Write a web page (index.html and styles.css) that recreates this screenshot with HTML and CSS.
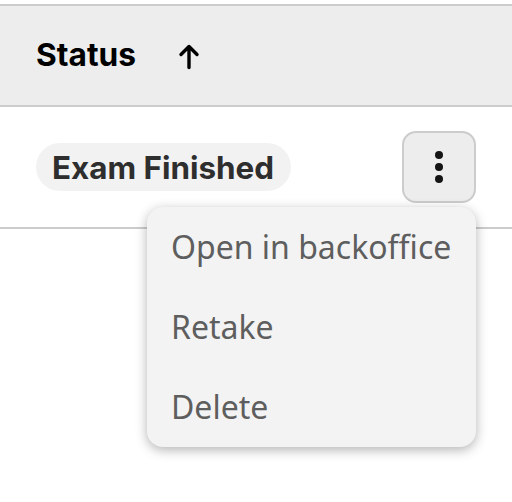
FILE: index.html
```html
<!DOCTYPE html>
<html lang="en">
<head>
<meta charset="utf-8">
<title>Status</title>
<link rel="stylesheet" href="styles.css">
</head>
<body>
<div class="table">
  <div class="head">
    <span class="head-label">Status</span>
    <svg class="sort" width="22" height="27" viewBox="0 0 22 27" aria-hidden="true"><path d="M11 24.500V3.500M3 11.500 11 3.500l8 8" fill="none" stroke="#000" stroke-width="3.4" stroke-linecap="round" stroke-linejoin="round"/></svg>
  </div>
  <div class="row">
    <span class="pill">Exam Finished</span>
    <button class="more" aria-label="More">
      <i class="dot"></i><i class="dot"></i><i class="dot"></i>
    </button>
    <ul class="menu">
      <li>Open in backoffice</li>
      <li>Retake</li>
      <li>Delete</li>
    </ul>
  </div>
</div>
</body>
</html>
```
FILE: styles.css
```css
* { box-sizing: border-box; }
html, body { margin: 0; height: 100%; background: #fff; overflow: hidden; }
.table { padding-top: 4px; }
.head {
  height: 103px;
  display: flex;
  align-items: center;
  gap: 42px;
  padding: 0 36px;
  background: #ededed;
  border-top: 2px solid #ccc;
  border-bottom: 2px solid #ccc;
}
.head-label { font: 700 31.7px/34px Inter, sans-serif; color: #000; margin-top: -1px; }
.sort { flex: none; margin-top: 2px; }
.row {
  position: relative;
  height: 122px;
  display: flex;
  align-items: center;
  justify-content: space-between;
  padding: 0 36px;
  border-bottom: 2px solid #ccc;
}
.pill {
  font: 700 31.4px/46px Inter, sans-serif;
  color: #2e2e2e;
  background: #f2f2f2;
  border-radius: 24px;
  padding: 2px 17px 0 16px;
}
.more {
  width: 74px;
  height: 72px;
  display: flex;
  flex-direction: column;
  align-items: center;
  justify-content: center;
  gap: 4px;
  padding: 0;
  background: #ededed;
  border: 2px solid #ccc;
  border-radius: 14px;
}
.dot { width: 8px; height: 8px; border-radius: 50%; background: #141414; }
.menu {
  position: absolute;
  left: 147px;
  top: 100px;
  width: 329px;
  height: 240px;
  margin: 0;
  padding: 0 24px;
  list-style: none;
  background: #f3f3f3;
  border-radius: 16px;
  box-shadow: 0 3px 12px rgba(0, 0, 0, 0.3);
  display: flex;
  flex-direction: column;
}
.menu li {
  height: 80px;
  display: flex;
  align-items: center;
  font: 400 32px/40px "Noto Sans", sans-serif;
  color: #5e5e5e;
  white-space: nowrap;
}
```
